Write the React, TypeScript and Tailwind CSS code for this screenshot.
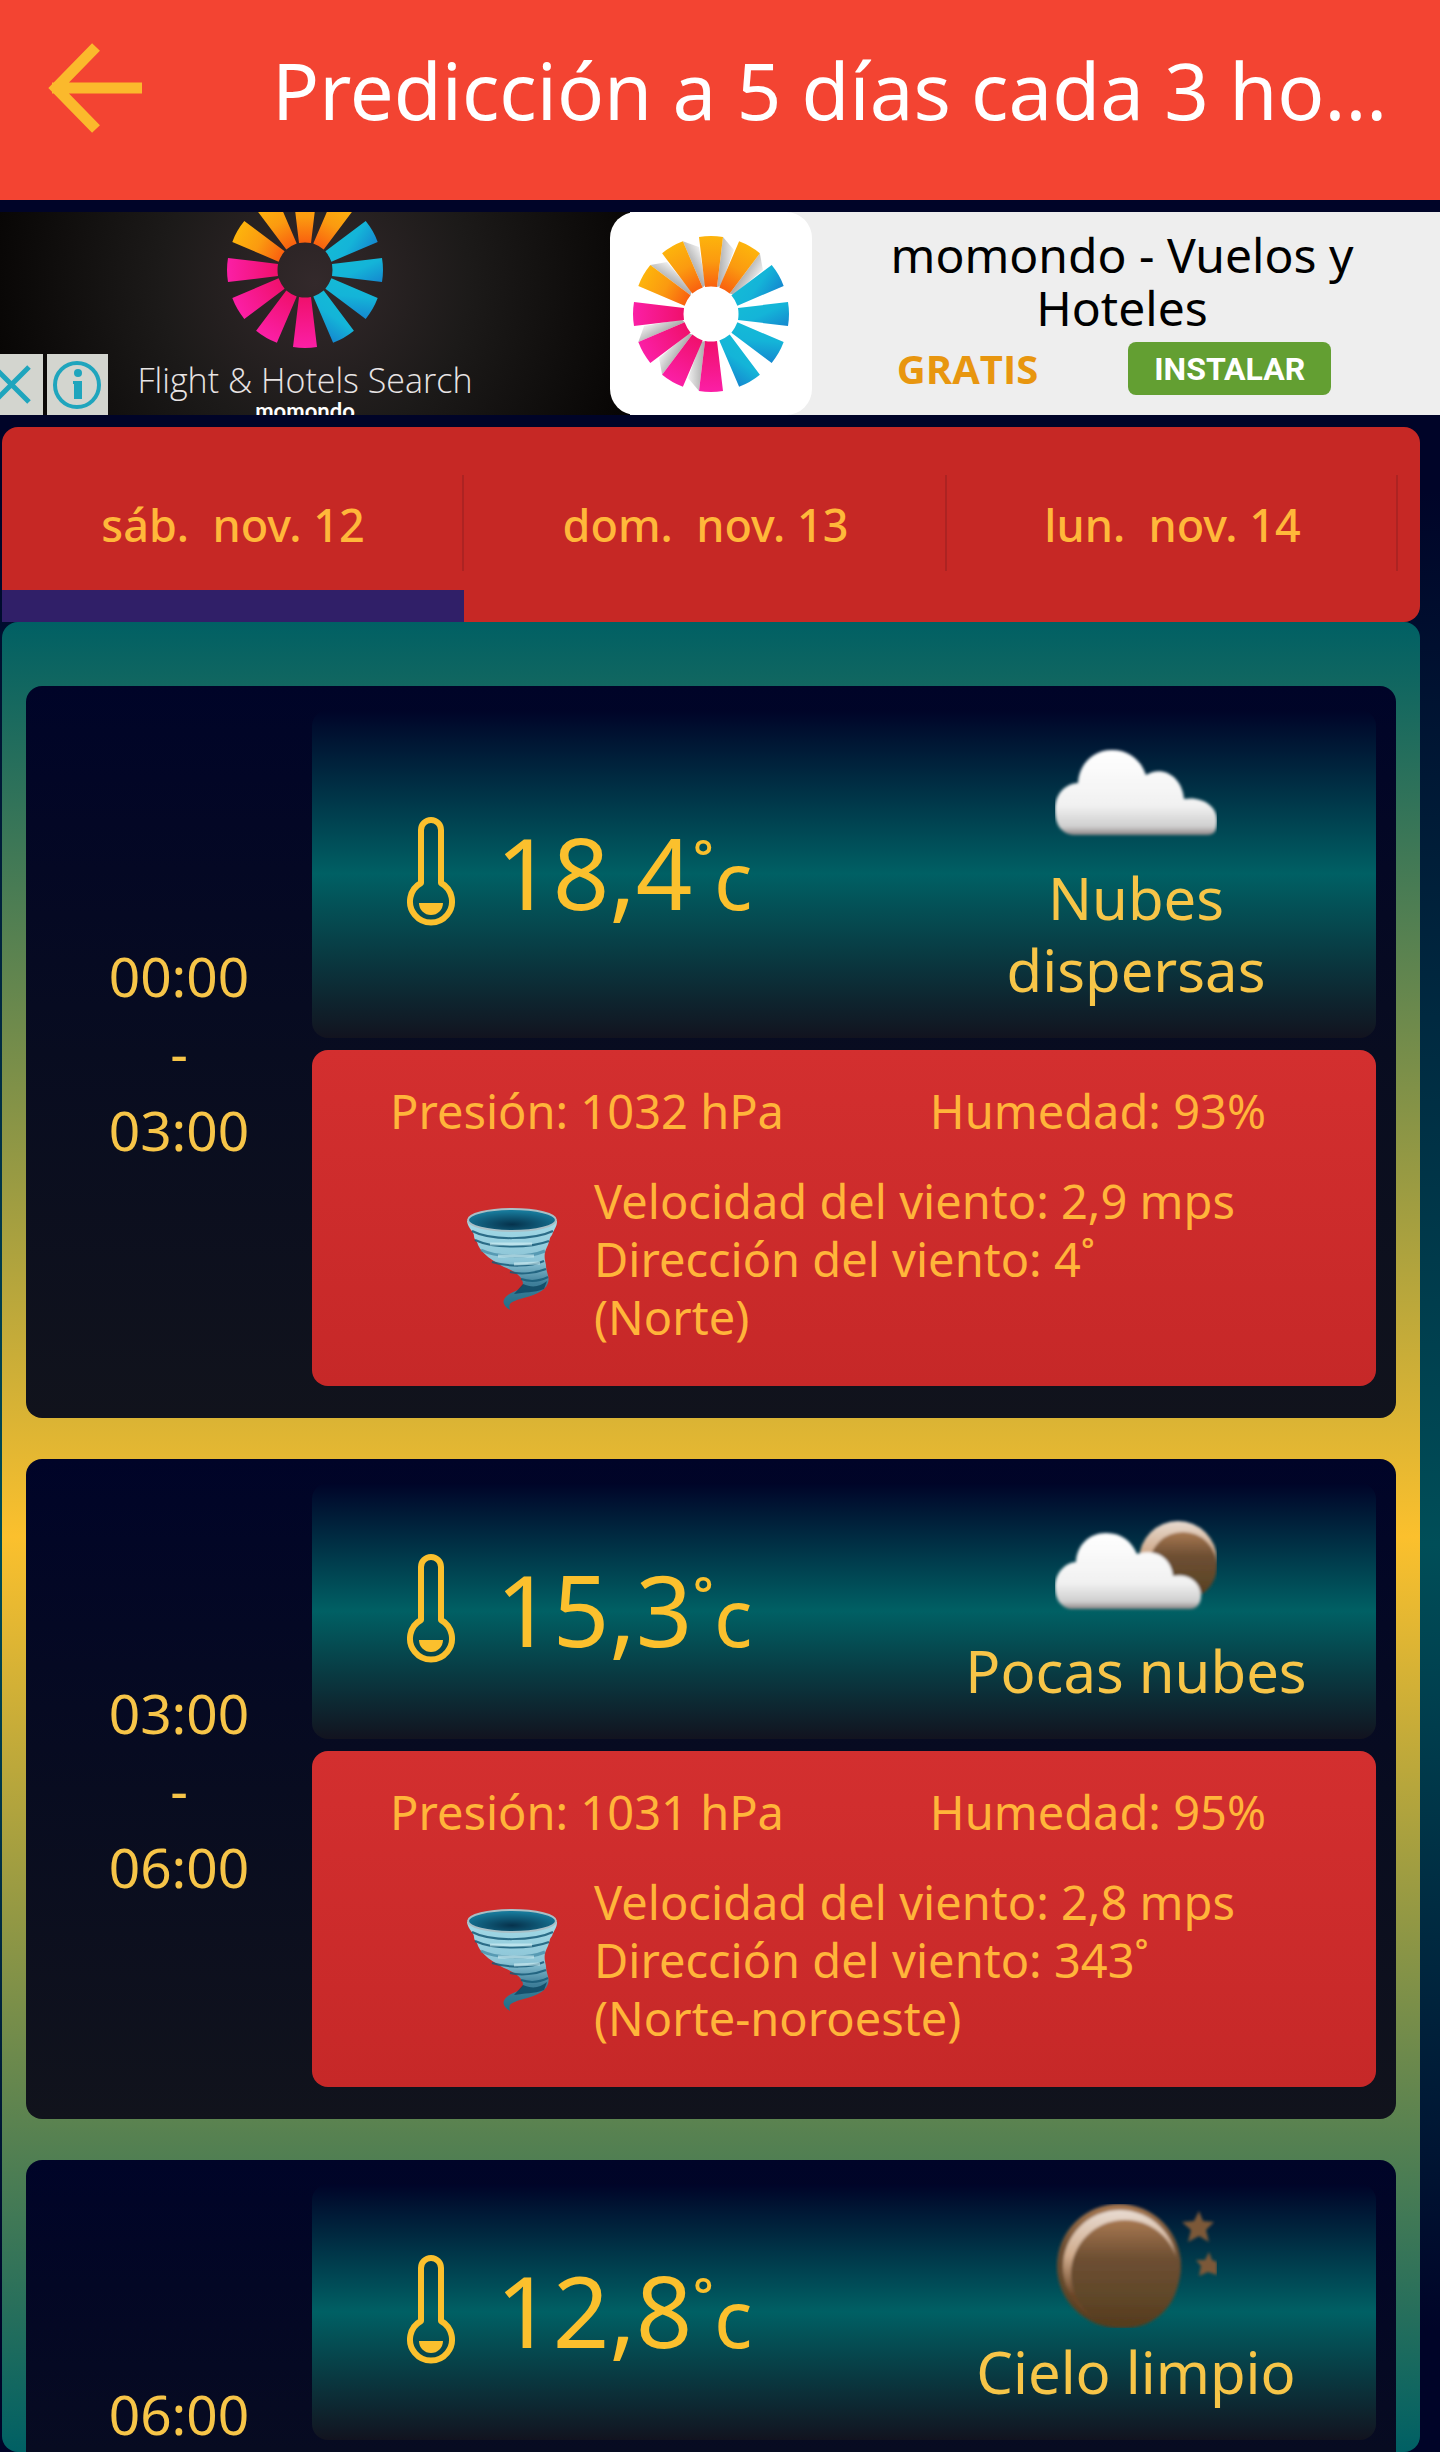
import React from 'react';

type Sky = 'clouds' | 'few' | 'clear';

interface Forecast {
  from: string;
  to: string;
  temp: string;
  sky: Sky;
  summary: string;
  pressure: number;
  humidity: number;
  windSpeed: string;
  windDegrees: number;
  windName: string;
}

const tabs = ['sáb.  nov. 12', 'dom.  nov. 13', 'lun.  nov. 14'];

const forecasts: Forecast[] = [
  {
    from: '00:00',
    to: '03:00',
    temp: '18,4',
    sky: 'clouds',
    summary: 'Nubes dispersas',
    pressure: 1032,
    humidity: 93,
    windSpeed: '2,9',
    windDegrees: 4,
    windName: 'Norte',
  },
  {
    from: '03:00',
    to: '06:00',
    temp: '15,3',
    sky: 'few',
    summary: 'Pocas nubes',
    pressure: 1031,
    humidity: 95,
    windSpeed: '2,8',
    windDegrees: 343,
    windName: 'Norte-noroeste',
  },
  {
    from: '06:00',
    to: '09:00',
    temp: '12,8',
    sky: 'clear',
    summary: 'Cielo limpio',
    pressure: 1031,
    humidity: 96,
    windSpeed: '2,6',
    windDegrees: 350,
    windName: 'Norte',
  },
];

const petalFills = ['orange', 'orange', 'blue', 'blue', 'blue', 'blue', 'pink', 'pink', 'pink', 'pink', 'orange', 'orange'];

const Burst: React.FC<{ id: string; shaded?: boolean; className?: string }> = ({ id, shaded, className }) => (
  <svg viewBox="-80 -80 160 160" className={className} aria-hidden="true">
    <defs>
      <linearGradient id={`${id}-orange`} x1="0" y1="0" x2="0" y2="1">
        <stop offset="0" stopColor="#fdb40c" />
        <stop offset="0.5" stopColor="#fb9a10" />
        <stop offset="1" stopColor="#f9600f" />
      </linearGradient>
      <linearGradient id={`${id}-blue`} x1="0" y1="1" x2="1" y2="0">
        <stop offset="0" stopColor="#14bcd6" />
        <stop offset="0.5" stopColor="#14b4d8" />
        <stop offset="1" stopColor="#1587cf" />
      </linearGradient>
      <linearGradient id={`${id}-pink`} x1="0" y1="0" x2="0" y2="1">
        <stop offset="0" stopColor="#fb1fa6" />
        <stop offset="1" stopColor="#f0106c" />
      </linearGradient>
      <linearGradient id={`${id}-shade`} x1="0" y1="0" x2="1" y2="0">
        <stop offset="0" stopColor="#a9a9a9" />
        <stop offset="1" stopColor="#efefef" />
      </linearGradient>
    </defs>
    {shaded &&
      [0, 30, 330, 300, 270, 240, 210].map((angle) => (
        <path key={angle} d="M6 -27 L12 -77 L23 -64 L10 -28 Z" fill={`url(#${id}-shade)`} transform={`rotate(${angle < 180 || angle > 280 ? angle : angle - 30})`} />
      ))}
    {petalFills.map((fill, i) => (
      <path key={i} d="M-12 -77 Q0 -79 12 -77 L6 -27 Q0 -28 -6 -27 Z" fill={`url(#${id}-${fill})`} transform={`rotate(${i * 30})`} />
    ))}
  </svg>
);

const AdBanner: React.FC = () => (
  <section className="mt-3 flex h-[203px] shrink-0 overflow-hidden bg-[#eeeeee]" aria-label="Anuncio">
    <div className="relative flex w-[630px] shrink-0 flex-col overflow-hidden bg-[radial-gradient(circle_at_50%_35%,#33292b_0%,#1c1a19_45%,#060403_100%)]">
      <Burst id="hero" className="absolute top-[-22px] left-[225px] size-40" />
      <p className="mt-[149px] pr-5 text-center font-['Open_Sans',sans-serif] text-[34px] leading-[38px] font-light text-[#e8e4e4]">
        Flight &amp; Hotels Search
      </p>
      <p className="pr-5 text-center font-['Lato',sans-serif] text-[22px] leading-6 font-bold text-white">momondo</p>
      <div className="absolute bottom-0 left-0 flex gap-1">
        <button type="button" aria-label="Cerrar anuncio" className="flex h-[61px] w-[43px] items-center justify-end overflow-hidden bg-[#d3d5cf]">
          <svg viewBox="0 0 43 61" className="h-[61px] w-[43px]" fill="none" stroke="#1fa5bd" strokeWidth="5">
            <path d="M-6 13 L29 48 M29 13 L-6 48" />
          </svg>
        </button>
        <button type="button" aria-label="Información del anuncio" className="h-[61px] w-[61px] bg-[#d3d5cf]">
          <svg viewBox="0 0 61 61" className="size-[61px]">
            <circle cx="30" cy="31" r="22" fill="none" stroke="#1fa5bd" strokeWidth="4" />
            <circle cx="31" cy="19" r="4" fill="#1fa5bd" />
            <path d="M26 27 H35 V45 H27 V30 H26 Z" fill="#1fa5bd" />
          </svg>
        </button>
      </div>
    </div>
    <div className="relative z-10 -ml-5 flex h-full w-[202px] shrink-0 items-center justify-center rounded-[26px] bg-white">
      <Burst id="app" shaded className="size-40" />
    </div>
    <div className="flex flex-1 flex-col items-center pt-4 pr-2">
      <p className="w-[490px] text-center font-['Noto_Sans',sans-serif] text-[48px] leading-[53px] text-black">momondo - Vuelos y Hoteles</p>
      <div className="mt-2 flex items-center gap-[90px] pr-4">
        <span className="font-['Open_Sans',sans-serif] text-[40px] leading-[53px] font-bold text-[#e8960f]">GRATIS</span>
        <button type="button" className="h-[53px] w-[203px] rounded-lg bg-[#639f32] font-['Roboto',sans-serif] text-[32px] font-bold text-white">
          INSTALAR
        </button>
      </div>
    </div>
  </section>
);

const Thermometer: React.FC = () => (
  <svg viewBox="0 0 50 112" className="h-28 w-[50px]" fill="none" aria-hidden="true">
    <path d="M15 67 V14 A10 10 0 0 1 35 14 V67 A21 21 0 1 1 15 67 Z" stroke="#fbc02d" strokeWidth="6" strokeLinejoin="round" />
    <path d="M13 87 H37 A12 12 0 0 1 13 87 Z" fill="#fbc02d" />
  </svg>
);

const Tornado: React.FC = () => (
  <svg viewBox="0 0 92 104" className="h-[104px] w-[92px]" aria-hidden="true">
    <defs>
      <linearGradient id="funnel" x1="0" y1="0" x2="0" y2="1">
        <stop offset="0" stopColor="#a4dbe8" />
        <stop offset="0.45" stopColor="#8cc4d6" />
        <stop offset="0.7" stopColor="#3f7f9a" />
        <stop offset="1" stopColor="#1f6f88" />
      </linearGradient>
      <radialGradient id="mouth" cx="0.5" cy="0.7" r="0.6">
        <stop offset="0" stopColor="#06324c" />
        <stop offset="1" stopColor="#17799a" />
      </radialGradient>
    </defs>
    <path d="M1 14 C2 22 8 24 8 29 C8 33 11 33 12 38 C16 47 27 54 38 60 C50 65 57 70 57 77 C56 84 48 83 42 88 C34 94 38 99 44 103 C42 96 45 95 54 92 C66 89 79 85 82 76 C84 69 80 66 80 58 C78 50 78 46 81 40 C84 34 83 31 86 28 C88 22 91 20 91 14 Z" fill="url(#funnel)" />
    <path d="M6 24 C25 34 68 33 87 24 M9 33 C28 42 65 41 83 34 M26 55 C42 60 64 60 78 54 M44 65 C55 68 70 66 80 62 M55 72 C64 75 74 74 82 70" fill="none" stroke="#175a78" strokeWidth="2" opacity="0.85" />
    <path d="M15 43 C32 51 62 51 79 44" fill="none" stroke="#3f86a2" strokeWidth="3" opacity="0.7" />
    <path d="M57 77 C66 81 74 80 81 74 L78 82 C68 86 58 85 48 87 Z" fill="#0d4560" opacity="0.8" />
    <path d="M24 37 L66 37 M32 49 L68 49 M48 57 L74 56" stroke="#d6f2f6" strokeWidth="3" opacity="0.6" />
    <ellipse cx="46" cy="13" rx="44" ry="11" fill="url(#mouth)" stroke="#a9bfc6" strokeWidth="2" />
  </svg>
);

const SkyIcon: React.FC<{ sky: Sky }> = ({ sky }) => (
  <svg viewBox="0 0 162 124" className="h-[124px] w-[162px]" aria-hidden="true">
    <defs>
      <linearGradient id={`cloud-${sky}`} x1="0" y1="0" x2="0" y2="1">
        <stop offset="0" stopColor="#ffffff" />
        <stop offset="0.65" stopColor="#f1f1f1" />
        <stop offset="0.9" stopColor="#cfcfcf" />
        <stop offset="1" stopColor="#8d8585" />
      </linearGradient>
      <linearGradient id={`moon-${sky}`} x1="0" y1="0" x2="0" y2="1">
        <stop offset="0" stopColor="#a87850" />
        <stop offset="0.35" stopColor="#6e4f33" />
        <stop offset="0.7" stopColor="#604729" />
        <stop offset="1" stopColor="#553a1c" />
      </linearGradient>
      <linearGradient id={`rim-${sky}`} x1="0" y1="0" x2="0" y2="1">
        <stop offset="0" stopColor="#e8dbd1" />
        <stop offset="0.4" stopColor="#d0ab8c" />
        <stop offset="0.75" stopColor="#6b4526" />
      </linearGradient>
      <filter id={`soft-${sky}`} x="-10%" y="-10%" width="120%" height="120%">
        <feGaussianBlur stdDeviation="1.5" />
      </filter>
    </defs>
    {sky === 'clouds' && (
      <path
        d="M19 105 C6 104 0 94 0 80 C0 65 9 54 23 53 C24 34 38 20 57 20 C74 20 86 30 91 45 C106 35 127 45 129 69 C147 66 162 76 162 90 C162 100 160 105 152 105 Z"
        fill="url(#cloud-clouds)"
        filter="url(#soft-clouds)"
      />
    )}
    {sky === 'few' && (
      <g filter="url(#soft-few)">
        <circle cx="123" cy="57" r="39" fill="url(#rim-few)" />
        <circle cx="128" cy="63" r="34" fill="url(#moon-few)" />
        <path
          d="M15 106 C5 104 0 95 0 84 C0 71 9 60 21 59 C22 42 34 30 51 30 C67 30 77 39 82 51 C101 45 116 55 118 73 C133 70 146 79 146 93 C146 100 142 106 135 106 Z"
          fill="url(#cloud-few)"
        />
      </g>
    )}
    {sky === 'clear' && (
      <g filter="url(#soft-clear)">
        <circle cx="64" cy="62" r="62" fill="url(#moon-clear)" />
        <circle cx="65" cy="63" r="57" fill="url(#rim-clear)" />
        <circle cx="70" cy="70" r="54" fill="url(#moon-clear)" />
        <path d="M144 7 L148 17 L159 18 L151 26 L154 38 L144 32 L133 38 L136 26 L127 18 L139 17 Z" fill="#7b5839" />
        <path d="M154 48 L157 56 L162 58 V71 L153 68 L144 72 L146 62 L141 56 L150 56 Z" fill="#7b5839" />
      </g>
    )}
  </svg>
);

const ForecastCard: React.FC<{ item: Forecast }> = ({ item }) => (
  <article className="flex shrink-0 rounded-2xl bg-linear-to-b/srgb from-[#000428] via-[#080c20] to-[#11131c] pt-6 pr-5 pb-8">
    <div className="flex w-[286px] shrink-0 flex-col items-center justify-center pt-2 pl-5 text-center text-[55px] leading-[77px] text-[#f7c548]">
      <time>{item.from}</time>
      <span>-</span>
      <time>{item.to}</time>
    </div>
    <div className="flex flex-1 flex-col gap-3">
      <div className="flex items-center rounded-2xl bg-linear-to-b/srgb from-[#000428] via-[#006064] to-[#12131f] pt-5 pb-8">
        <div className="flex flex-1 items-center gap-10 pt-2 pl-[94px]">
          <Thermometer />
          <p className="text-[99px] leading-[112px] text-[#fbc02d]">
            {item.temp}
            <span className="align-[12px] text-[72px] leading-none">˚</span>
            <span className="text-[80px] leading-none">c</span>
          </p>
        </div>
        <div className="flex w-[480px] flex-col items-center">
          <SkyIcon sky={item.sky} />
          <p className="mt-2 w-[360px] text-center text-[58px] leading-[72px] text-[#f7c548]">{item.summary}</p>
        </div>
      </div>
      <div className="rounded-2xl bg-linear-to-b/srgb from-[#d32f2f] to-[#c62828] pt-8 pb-10 text-[47px] leading-[58px] text-[#ffb53a]">
        <div className="flex justify-between pr-[110px] pl-[78px]">
          <span>Presión: {item.pressure} hPa</span>
          <span>Humedad: {item.humidity}%</span>
        </div>
        <div className="mt-8 flex items-center gap-9 pl-[154px]">
          <Tornado />
          <div>
            <p>Velocidad del viento: {item.windSpeed} mps</p>
            <p>Dirección del viento: {item.windDegrees}˚</p>
            <p>({item.windName})</p>
          </div>
        </div>
      </div>
    </div>
  </article>
);

const App: React.FC = () => (
  <div className="flex h-screen flex-col overflow-hidden bg-linear-to-b/srgb from-[#000428] from-20% via-[#004e58] via-63% to-[#000428] to-95% font-['Noto_Sans',sans-serif]">
    <header className="flex h-[200px] shrink-0 items-center bg-[#f34432] pl-12">
      <button type="button" aria-label="Volver" className="mb-6">
        <svg viewBox="0 0 96 90" className="h-[90px] w-24" fill="none" stroke="#fbb92c" strokeWidth="11">
          <path d="M4 45 H94 M48 4 L8 45 L48 86" />
        </svg>
      </button>
      <h1 className="mb-5 ml-[128px] text-[78px] leading-[110px] whitespace-nowrap text-white">Predicción a 5 días cada 3 ho...</h1>
    </header>

    <AdBanner />

    <nav className="mt-3 mr-5 ml-0.5 h-[195px] shrink-0 overflow-hidden rounded-2xl rounded-bl-none bg-[#c62825] pr-[22px]">
      <div role="tablist" className="grid h-full grid-cols-[462fr_483fr_451fr]">
        {tabs.map((label, i) => (
          <button
            key={label}
            type="button"
            role="tab"
            aria-selected={i === 0}
            className="relative flex items-center justify-center text-[45px] font-medium whitespace-pre text-[#ffb83a]"
          >
            {label}
            <span className="absolute top-12 right-0 h-24 w-0.5 bg-[#ad2322]" />
            {i === 0 && <span className="absolute inset-x-0 bottom-0 h-8 bg-[#301f68]" />}
          </button>
        ))}
      </div>
    </nav>

    <main className="mr-5 ml-0.5 flex min-h-0 flex-1 flex-col gap-[41px] overflow-y-auto rounded-2xl bg-linear-to-b/srgb from-[#006064] via-[#fbc02d] to-[#006064] px-6 pt-16 [scrollbar-width:none]">
      {forecasts.map((item) => (
        <ForecastCard key={item.from} item={item} />
      ))}
    </main>
  </div>
);

export default App;
